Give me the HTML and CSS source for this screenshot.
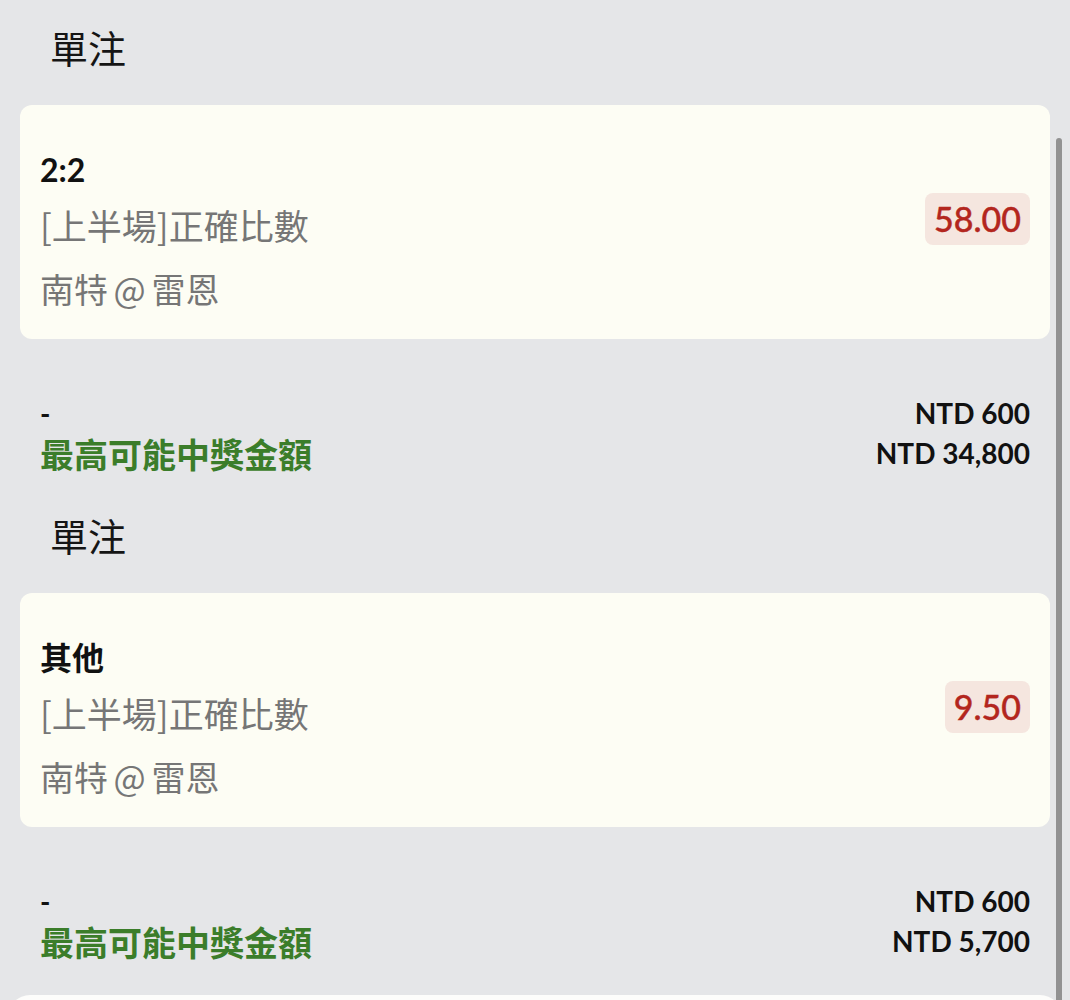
FILE: index.html
```html
<!DOCTYPE html>
<html lang="zh-Hant">
<head>
<meta charset="utf-8">
<link rel="stylesheet" href="styles.css">
</head>
<body>
<div class="page">
  <section class="bet">
    <div class="heading">單注</div>
    <div class="card">
      <div class="info">
        <div class="pick">2:2</div>
        <div class="market">[上半場]正確比數</div>
        <div class="match">南特 @ 雷恩</div>
      </div>
      <div class="odds">58.00</div>
    </div>
    <div class="summary">
      <div class="row"><span class="dash">-</span><span class="amt">NTD 600</span></div>
      <div class="row"><span class="win">最高可能中獎金額</span><span class="amt">NTD 34,800</span></div>
    </div>
  </section>
  <section class="bet">
    <div class="heading">單注</div>
    <div class="card">
      <div class="info">
        <div class="pick">其他</div>
        <div class="market">[上半場]正確比數</div>
        <div class="match">南特 @ 雷恩</div>
      </div>
      <div class="odds">9.50</div>
    </div>
    <div class="summary">
      <div class="row"><span class="dash">-</span><span class="amt">NTD 600</span></div>
      <div class="row"><span class="win">最高可能中獎金額</span><span class="amt">NTD 5,700</span></div>
    </div>
  </section>
  <div class="footer"></div>
</div>
<div class="scrollbar"></div>
</body>
</html>
```
FILE: styles.css
```css
html, body {
  margin: 0;
  padding: 0;
  background: #e5e6e8;
  overflow: hidden;
  height: 1000px;
}
body {
  font-family: "Lato", "Noto Sans CJK TC", sans-serif;
  color: #111;
  position: relative;
}
.page {
  padding: 24px 20px 0 20px;
}
.bet + .bet {
  margin-top: 39px;
}
.heading {
  font-family: "Noto Sans CJK TC", sans-serif;
  font-size: 38px;
  line-height: 46px;
  padding-left: 30px;
  margin-bottom: 35px;
  color: #151515;
}
.card {
  background: #fdfdf4;
  border-radius: 12px;
  padding: 0 20px;
  display: flex;
  align-items: center;
  justify-content: space-between;
  height: 234px;
  box-sizing: border-box;
}
.info {
  padding-top: 45px;
  padding-bottom: 25px;
  align-self: flex-start;
}
.pick {
  font-family: "Lato", "Noto Sans CJK TC", sans-serif;
  font-weight: 700;
  font-size: 32px;
  line-height: 40px;
  margin-bottom: 10px;
  color: #111;
}
.market, .match {
  font-family: "Noto Sans CJK TC", sans-serif;
  font-size: 35px;
  line-height: 50px;
  color: #767676;
}
.match {
  margin-top: 14px;
  font-size: 34px;
  word-spacing: -2px;
}
.odds {
  background: #f5e6df;
  color: #b3261e;
  font-family: "Lato", sans-serif;
  font-weight: 500;
  font-size: 34px;
  line-height: 52px;
  padding: 0 9px;
  border-radius: 8px;
  margin-top: -6px;
  -webkit-text-stroke: 0.4px #b3261e;
}
.summary {
  margin-top: 54px;
}
.row {
  display: flex;
  justify-content: space-between;
  align-items: center;
  height: 40px;
}
.dash {
  font-family: "Lato", sans-serif;
  font-weight: 700;
  font-size: 28px;
  padding-left: 20px;
}
.amt {
  font-family: "Lato", sans-serif;
  font-weight: 700;
  font-size: 28px;
  padding-right: 20px;
  color: #111;
}
.win {
  font-family: "Noto Sans CJK TC", sans-serif;
  font-weight: 700;
  font-size: 34px;
  color: #3b7d2a;
  padding-left: 20px;
}
.footer {
  margin: 34px -12px 0;
  height: 40px;
  background: #fdfdfb;
  border-radius: 22px 22px 0 0;
}
.scrollbar {
  position: absolute;
  left: 1056px;
  top: 138px;
  width: 6px;
  height: 880px;
  background: #929292;
  border-radius: 3px;
}
```
